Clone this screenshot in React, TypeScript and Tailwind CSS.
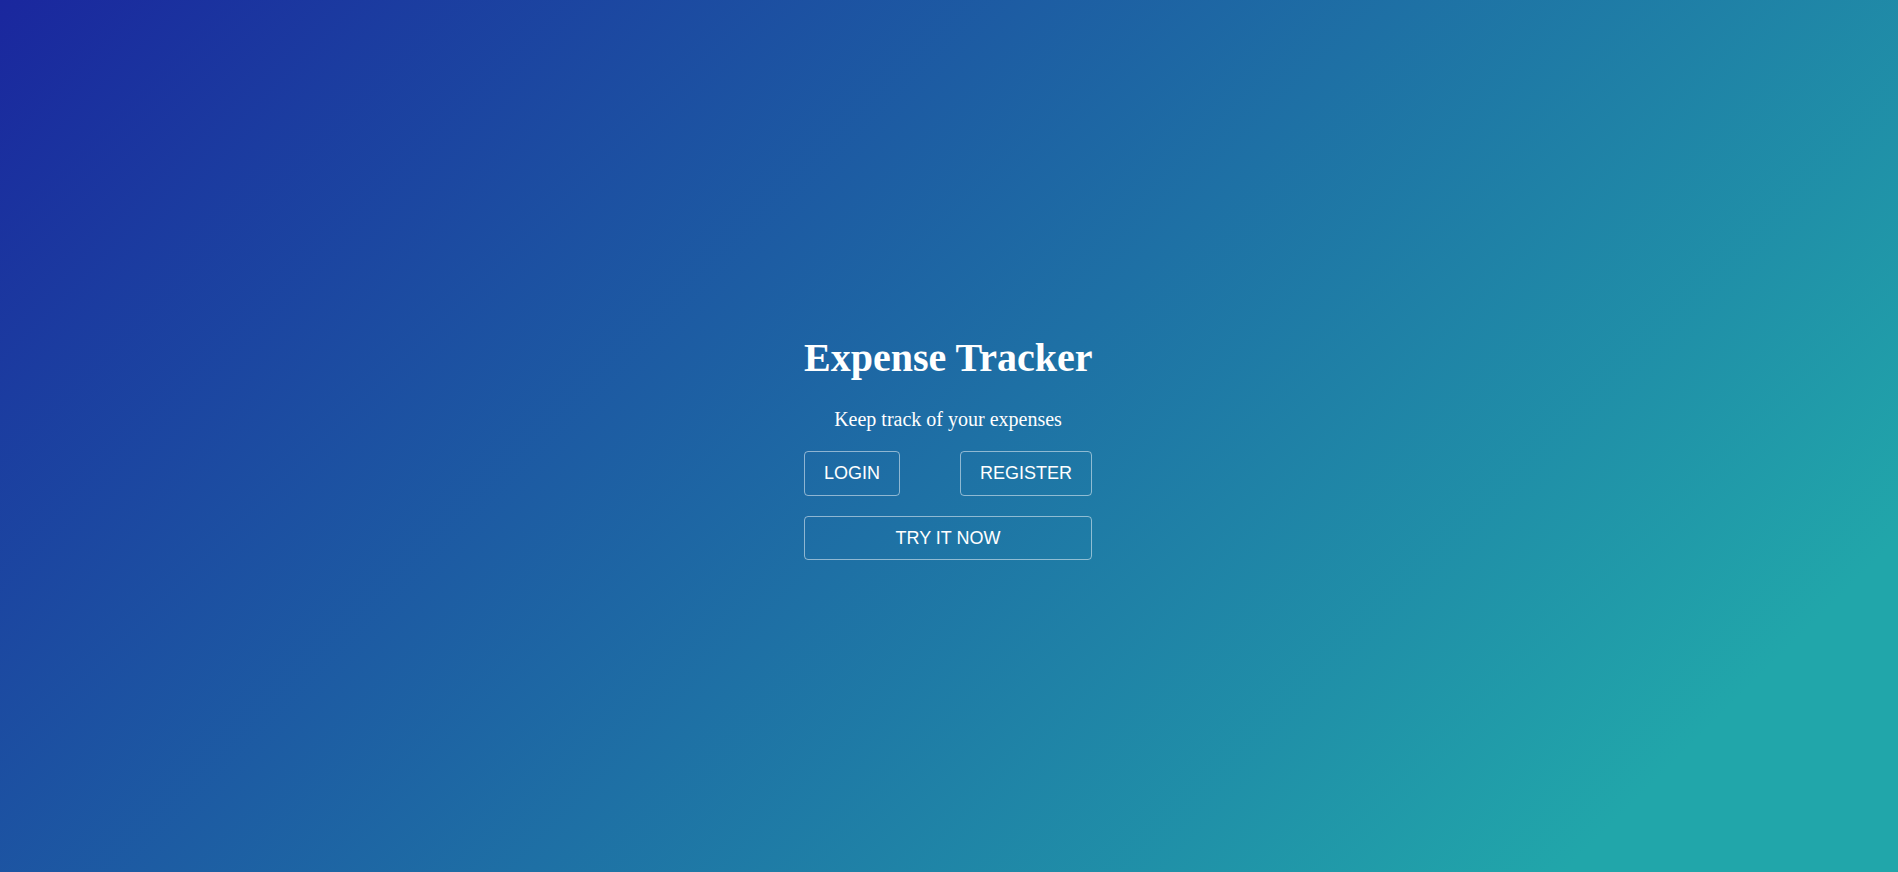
export default function App() {
  return (
    <div className="min-h-screen w-full flex items-center justify-center pt-[24px] pr-[2px] bg-[linear-gradient(135deg,#1a279e_0%,#21a6aa_88%)]">
      <div className="w-[288px] flex flex-col items-stretch text-white">
        <h1 className="whitespace-nowrap text-center text-[40px] leading-[44px] font-bold font-['Liberation_Serif','Times_New_Roman',serif]">
          Expense Tracker
        </h1>
        <p className="mt-[28px] whitespace-nowrap text-center text-[20px] leading-[22px] font-['Liberation_Serif','Times_New_Roman',serif]">
          Keep track of your expenses
        </p>
        <div className="mt-[21px] flex justify-between">
          <button className="h-[45px] px-[19px] rounded-[4px] border border-white/50 text-[18px] font-['Liberation_Sans',Arial,sans-serif]">
            LOGIN
          </button>
          <button className="h-[45px] px-[19px] rounded-[4px] border border-white/50 text-[18px] font-['Liberation_Sans',Arial,sans-serif]">
            REGISTER
          </button>
        </div>
        <button className="mt-[20px] h-[44px] w-full rounded-[4px] border border-white/50 text-[18px] font-['Liberation_Sans',Arial,sans-serif]">
          TRY IT NOW
        </button>
      </div>
    </div>
  );
}
